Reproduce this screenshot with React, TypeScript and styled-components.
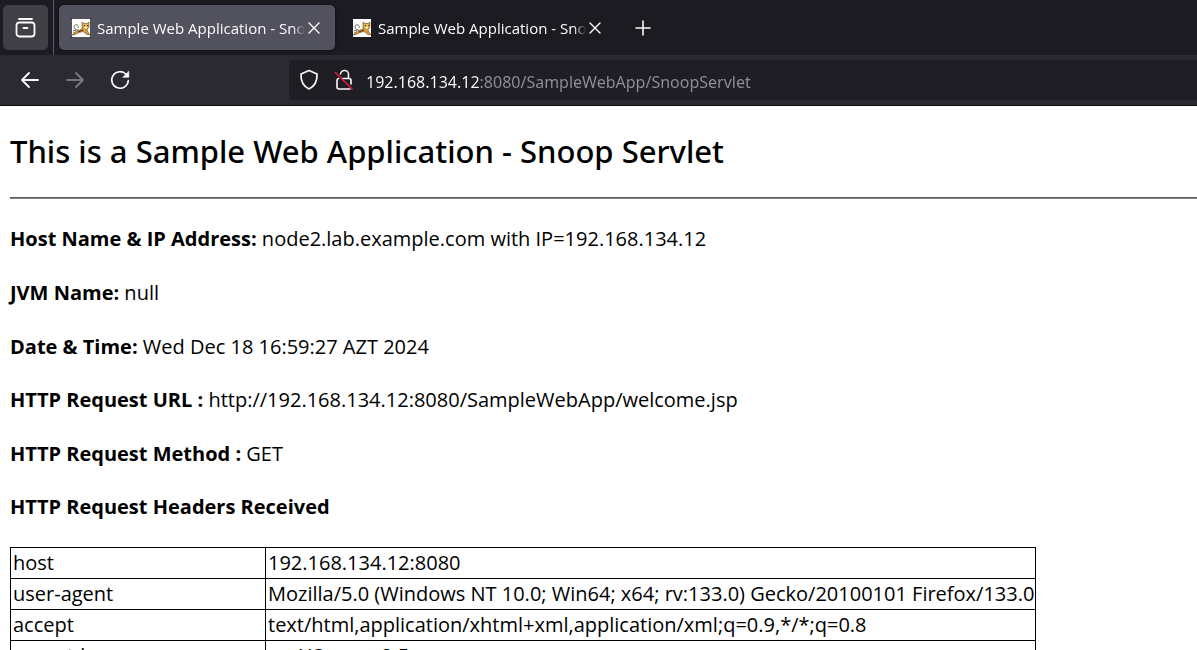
import React from "react";
import styled, { createGlobalStyle } from "styled-components";

const GlobalStyle = createGlobalStyle`
  * { box-sizing: border-box; }
  body {
    margin: 0;
    background: #fff;
    color: #000;
    font-family: "Open Sans", "Noto Sans", sans-serif;
  }
`;

const Window = styled.div`
  display: flex;
  flex-direction: column;
  height: 100vh;
  overflow: hidden;
`;

const Chrome = styled.header`
  flex: none;
  border-bottom: 1px solid #0c0c0d;
  background: #2b2a33;
  color: #fbfbfe;
  font-size: 16px;
`;

const TabStrip = styled.div`
  display: flex;
  align-items: center;
  height: 55px;
  background: #1c1b22;
`;

const ViewCell = styled.div`
  display: flex;
  align-items: center;
  align-self: stretch;
  padding: 0 5px 0 3px;
  border-right: 1px solid #5b5b66;
`;

const IconButton = styled.button<{ $size: number; $filled?: boolean }>`
  display: flex;
  flex: none;
  align-items: center;
  justify-content: center;
  width: ${(p) => p.$size}px;
  height: ${(p) => p.$size}px;
  padding: 0;
  border: 0;
  border-radius: 5px;
  background: ${(p) => (p.$filled ? "#403f46" : "transparent")};
  color: inherit;

  &:disabled {
    color: #77767d;
  }
`;

const Tabs = styled.div`
  display: flex;
  gap: 5px;
  padding: 0 8px 0 5px;
`;

const Tab = styled.div<{ $active?: boolean }>`
  display: flex;
  align-items: center;
  width: 276px;
  height: 45px;
  padding: 0 12px;
  border-radius: 5px;
  background: ${(p) => (p.$active ? "#52525e" : "transparent")};
  box-shadow: ${(p) => (p.$active ? "0 0 4px rgba(0, 0, 0, 0.5)" : "none")};
`;

const TabLabel = styled.button`
  flex: 1;
  min-width: 0;
  margin-left: 6px;
  padding: 0;
  overflow: hidden;
  border: 0;
  background: none;
  color: inherit;
  font: 15px/24px "Open Sans", "Noto Sans", sans-serif;
  text-align: left;
  white-space: nowrap;
  mask-image: linear-gradient(to left, transparent, #000 12px);
`;

const Toolbar = styled.div`
  display: flex;
  align-items: center;
  height: 50px;
  padding-left: 7px;
`;

const NavButtons = styled.nav`
  display: flex;
  width: 282px;
`;

const AddressBar = styled.div`
  display: flex;
  flex: 1;
  align-items: center;
  height: 40px;
  padding-left: 9px;
  border-radius: 4px 0 0 4px;
  background: #1f1e25;
`;

const SiteIcons = styled.div`
  display: flex;
  gap: 13px;
  margin-right: 11px;
`;

const AddressInput = styled.input`
  flex: 1;
  min-width: 0;
  height: 40px;
  padding: 4px 0 0;
  border: 0;
  outline: 0;
  background: linear-gradient(to right, #fbfbfe 114px, #918f96 114px);
  background-clip: text;
  color: transparent;
  font: 16px/24px "Noto Sans", "Open Sans", sans-serif;
`;

const Page = styled.main`
  padding: 25px 0 0 10px;
  font-size: 20px;
  line-height: 28px;
`;

const Title = styled.h1`
  margin: 0 0 25px;
  font-family: "Noto Sans", "Open Sans", sans-serif;
  font-size: 31px;
  font-weight: 500;
  line-height: 41px;
`;

const Rule = styled.hr`
  height: 2px;
  margin: 0 0 26px;
  border: 0;
  border-top: 1px solid #5a5a5a;
  background: #858585;
`;

const Facts = styled.section`
  display: flex;
  flex-direction: column;
  gap: 26px;
  margin-bottom: 25px;
`;

const Fact = styled.p`
  margin: 0;
`;

const TableHeading = styled.h2`
  margin: 0 0 26px;
  font-size: 20px;
  line-height: 28px;
`;

const HeaderTable = styled.table`
  border-collapse: collapse;
  white-space: nowrap;
`;

const Cell = styled.td`
  padding: 1px 1px 1px 2px;
  border: 1px solid #000;

  &:first-child {
    width: 255px;
  }
`;

const Favicon = () => (
  <svg width="20" height="20" viewBox="0 0 20 20" aria-hidden="true">
    <path fill="#fff" d="M1 1h18v18H1z" />
    <path fill="none" stroke="#444" strokeWidth=".8" d="M7 12C3 12 2 8 4 7s4 1 3 3M2 13l3-1M2 15h3" />
    <path fill="#d99a35" stroke="#6b5126" strokeWidth=".6" d="M11 4l2 1.500h3L18 4v5l-2 3 1 2 2 3-3-.5-4-3-4 1-4 2-3 .5 3-3 4-2 3-1z" />
    <path fill="#e8bd62" d="M12 6h5v3l-2 2-2-1z" />
    <path fill="#fff" d="M13 9h3l-1 2z" />
    <path fill="#222" d="M13 7h1v1h-1zM16 7h1v1h-1zM0 0h1v1H0zM19 0h1v1h-1zM0 19h1v1H0zM19 19h1v1h-1z" />
    <path stroke="#222" strokeWidth=".8" d="M7 14l5-2" />
  </svg>
);

type StrokeProps = { size: number; width?: number; children: React.ReactNode };

const Stroke = ({ size, width = 2, children }: StrokeProps) => (
  <svg
    width={size}
    height={size}
    viewBox={`0 0 ${size} ${size}`}
    fill="none"
    stroke="currentColor"
    strokeWidth={width}
    strokeLinecap="round"
    strokeLinejoin="round"
    aria-hidden="true"
  >
    {children}
  </svg>
);

const BrowserTab = ({ active }: { active?: boolean }) => (
  <Tab $active={active}>
    <Favicon />
    <TabLabel type="button">Sample Web Application - Snoop Servlet</TabLabel>
    <IconButton $size={18} type="button" aria-label="Close tab">
      <Stroke size={18} width={1.4}>
        <path d="M4 4l10 10M14 4L4 14" />
      </Stroke>
    </IconButton>
  </Tab>
);

const headers = [
  ["host", "192.168.134.12:8080"],
  ["user-agent", "Mozilla/5.0 (Windows NT 10.0; Win64; x64; rv:133.0) Gecko/20100101 Firefox/133.0"],
  ["accept", "text/html,application/xhtml+xml,application/xml;q=0.9,*/*;q=0.8"],
  ["accept-language", "en-US,en;q=0.5"],
];

export default function App() {
  return (
    <Window>
      <GlobalStyle />
      <Chrome>
        <TabStrip>
          <ViewCell>
            <IconButton $size={45} $filled type="button" aria-label="Firefox View">
              <Stroke size={22} width={1.8}>
                <path d="M4 2h13" />
                <rect x="1.5" y="5.500" width="18" height="14" rx="3" />
                <path d="M8.500 11h4" />
              </Stroke>
            </IconButton>
          </ViewCell>
          <Tabs>
            <BrowserTab active />
            <BrowserTab />
          </Tabs>
          <IconButton $size={38} type="button" aria-label="New tab">
            <Stroke size={20} width={1.6}>
              <path d="M10 3v14M3 10h14" />
            </Stroke>
          </IconButton>
        </TabStrip>
        <Toolbar>
          <NavButtons>
            <IconButton $size={45} type="button" aria-label="Back">
              <Stroke size={22} width={1.8}>
                <path d="M19 11H3M10 4l-7 7 7 7" />
              </Stroke>
            </IconButton>
            <IconButton $size={45} type="button" aria-label="Forward" disabled>
              <Stroke size={22} width={1.8}>
                <path d="M3 11h16M12 4l7 7-7 7" />
              </Stroke>
            </IconButton>
            <IconButton $size={45} type="button" aria-label="Reload">
              <Stroke size={22} width={1.6}>
                <path d="M19.300 11.500A8.300 8.300 0 1 1 17 5.200L18.500 7" />
                <path fill="currentColor" strokeWidth=".6" d="M19.800 2.500v5.800H14z" />
              </Stroke>
            </IconButton>
          </NavButtons>
          <AddressBar>
            <SiteIcons>
              <Stroke size={22} width={1.7}>
                <path d="M11 1.500l8 3.500c.3 6-2 12-8 15C5 17 2.700 11 3 5z" />
              </Stroke>
              <Stroke size={22} width={1.6}>
                <path d="M7.500 5a4 4 0 0 1 8 1v3.500M9.500 9.500H16a2 2 0 0 1 2 2V15M17 20H6a2 2 0 0 1-2-2v-6.500a2 2 0 0 1 1.500-2" />
                <path stroke="#e3173f" d="M2.500 3.500l16.500 16.500" />
              </Stroke>
            </SiteIcons>
            <AddressInput
              aria-label="Address"
              defaultValue="192.168.134.12:8080/SampleWebApp/SnoopServlet"
              spellCheck={false}
            />
          </AddressBar>
        </Toolbar>
      </Chrome>
      <Page>
        <Title>This is a Sample Web Application - Snoop Servlet</Title>
        <Rule />
        <Facts>
          <Fact>
            <b>Host Name &amp; IP Address:</b> node2.lab.example.com with IP=192.168.134.12
          </Fact>
          <Fact>
            <b>JVM Name:</b> null
          </Fact>
          <Fact>
            <b>Date &amp; Time:</b> Wed Dec 18 16:59:27 AZT 2024
          </Fact>
        </Facts>
        <Facts>
          <Fact>
            <b>HTTP Request URL :</b> http://192.168.134.12:8080/SampleWebApp/welcome.jsp
          </Fact>
          <Fact>
            <b>HTTP Request Method :</b> GET
          </Fact>
        </Facts>
        <TableHeading>HTTP Request Headers Received</TableHeading>
        <HeaderTable>
          <tbody>
            {headers.map(([name, value]) => (
              <tr key={name}>
                <Cell>{name}</Cell>
                <Cell>{value}</Cell>
              </tr>
            ))}
          </tbody>
        </HeaderTable>
      </Page>
    </Window>
  );
}
